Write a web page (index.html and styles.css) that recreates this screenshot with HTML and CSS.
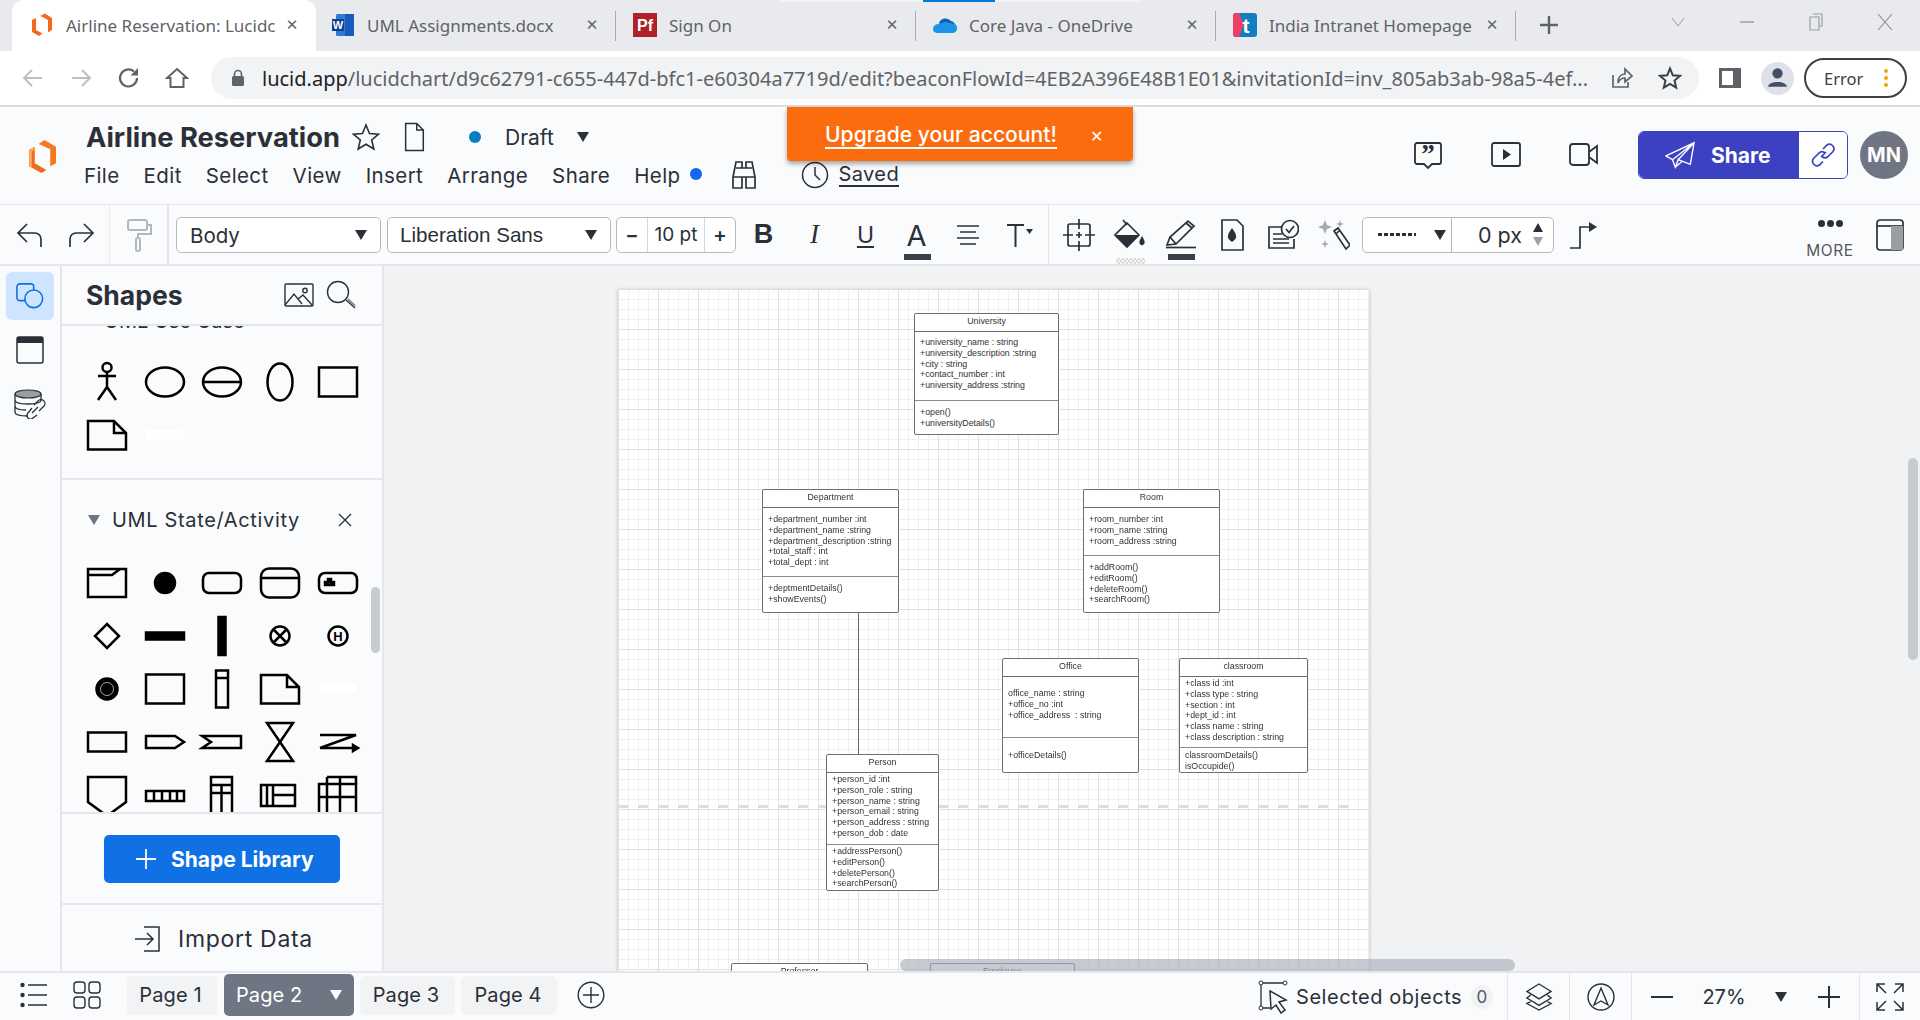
FILE: index.html
```html
<!DOCTYPE html>
<html lang="en">
<head>
<meta charset="utf-8">
<title>Airline Reservation: Lucidchart</title>
<link rel="stylesheet" href="styles.css">
</head>
<body>
<div class="topline"><span class="topline-blue"></span></div>
<div class="tabstrip">
  <div class="tab tab-active">
    <svg class="fav" viewBox="0 0 24 24"><path d="M10 3 L15 0.5 L22 5 V17 L18 19.5 V7 L13.5 4.5Z M2 7 L6 5 V17 L12.5 20.5 L9 23 L2 19Z" fill="#f26a1b"/></svg>
    <span class="tab-text">Airline Reservation: Lucidc</span>
    <span class="tab-x">✕</span>
  </div>
  <div class="tab tab-word">
    <svg class="fav" viewBox="0 0 24 24"><rect x="5" y="1" width="18" height="22" rx="1.5" fill="#2b7cd3"/><rect x="14" y="1" width="9" height="22" fill="#185abd"/><rect x="1" y="6" width="12" height="12" fill="#103f91"/><text x="7" y="15.5" class="fav-w">W</text></svg>
    <span class="tab-text">UML Assignments.docx</span>
    <span class="tab-x">✕</span>
  </div>
  <div class="tab">
    <svg class="fav" viewBox="0 0 24 24"><rect width="24" height="24" fill="#b0222a"/><text x="12" y="18" class="fav-pf">Pf</text></svg>
    <span class="tab-text">Sign On</span>
    <span class="tab-x">✕</span>
  </div>
  <div class="tab">
    <svg class="fav" viewBox="0 0 24 24"><path d="M6 10 A7 7 0 0 1 18 8 A6 6 0 0 1 22 11 L10 16Z" fill="#0a5fb5"/><path d="M1 19 A5 5 0 0 1 5 11 L12 9 L22 11 A5 5 0 0 1 20 20 H4 Z" fill="#1c95e6"/></svg>
    <span class="tab-text">Core Java - OneDrive</span>
    <span class="tab-x">✕</span>
  </div>
  <div class="tab tab-last">
    <svg class="fav" viewBox="0 0 24 24"><rect width="24" height="24" rx="3" fill="#0f7fc1"/><path d="M0 3 A3 3 0 0 1 3 0 H6 L11 12 L6 24 H3 A3 3 0 0 1 0 21Z" fill="#ee3f66"/><text x="13" y="20" class="fav-t">t</text></svg>
    <span class="tab-text">India Intranet Homepage</span>
    <span class="tab-x">✕</span>
  </div>
  <svg class="tab-plus" viewBox="0 0 20 20"><path d="M10 1 V19 M1 10 H19" stroke="#5f6368" stroke-width="2.4"/></svg>
  <div class="win-ctrls">
    <svg class="win" viewBox="0 0 20 20"><path d="M4 6 L10 14 L16 6" fill="none" stroke="#9a9da2" stroke-width="1"/></svg>
    <svg class="win" viewBox="0 0 20 20"><path d="M3 10 H17" stroke="#8a8d92" stroke-width="1.2"/></svg>
    <svg class="win" viewBox="0 0 20 20"><path d="M7 2 H16 V14 H13 M4 5 H13 V18 H4Z" fill="none" stroke="#9a9da2" stroke-width="1.2"/></svg>
    <svg class="win" viewBox="0 0 20 20"><path d="M3 2 L17 18 M17 2 L3 18" stroke="#8a8d92" stroke-width="1.1"/></svg>
  </div>
</div>

<div class="addrbar">
  <svg class="nav-ic" viewBox="0 0 24 24"><path d="M21 12 H3 M11 4 L3 12 L11 20" fill="none" stroke="#bdbfc2" stroke-width="2"/></svg>
  <svg class="nav-ic" viewBox="0 0 24 24"><path d="M3 12 H21 M13 4 L21 12 L13 20" fill="none" stroke="#bdbfc2" stroke-width="2"/></svg>
  <svg class="nav-ic" viewBox="0 0 24 24"><path d="M20 12 A8.5 8.5 0 1 1 17 5.5" fill="none" stroke="#5f6368" stroke-width="2.2"/><path d="M21 2 V9.5 H13.5Z" fill="#5f6368"/></svg>
  <svg class="nav-ic" viewBox="0 0 24 24"><path d="M12 3 L22 12 H18.5 V21 H5.5 V12 H2Z" fill="none" stroke="#5f6368" stroke-width="2"/></svg>
  <div class="omnibox">
    <svg class="lock" viewBox="0 0 14 18"><path d="M3.5 7 V5 A3.5 3.5 0 0 1 10.500 5 V7" fill="none" stroke="#5f6368" stroke-width="1.6"/><rect x="1" y="7" width="12" height="10" rx="1.5" fill="#5f6368"/></svg>
    <span class="url"><span class="url-host">lucid.app</span>/lucidchart/d9c62791-c655-447d-bfc1-e60304a7719d/edit?beaconFlowId=4EB2A396E48B1E01&amp;invitationId=inv_805ab3ab-98a5-4ef...</span>
    <svg class="omni-ic" viewBox="0 0 24 24"><path d="M3 9 V21 H18 V16" fill="none" stroke="#5f6368" stroke-width="1.7"/><path d="M8 17 C8 11 11 8 15 8 V3 L22 10 L15 16 V12 C12 12 9.500 13.500 8 17Z" fill="none" stroke="#5f6368" stroke-width="1.7"/></svg>
    <svg class="omni-ic star-ic" viewBox="0 0 24 24"><path d="M12 2.500 L14.800 9.300 L22 9.900 L16.500 14.600 L18.200 21.700 L12 17.900 L5.800 21.700 L7.500 14.600 L2 9.900 L9.200 9.300Z" fill="none" stroke="#3c4043" stroke-width="2"/></svg>
  </div>
  <svg class="side-ic" viewBox="0 0 22 20"><path d="M0 0 H22 V20 H0Z M3 3 V17 H14 V3Z" fill="#5f6368" fill-rule="evenodd"/></svg>
  <span class="profile"><svg viewBox="0 0 32 32"><circle cx="16" cy="11" r="5" fill="#44506a"/><path d="M7 24 C7 18 25 18 25 24Z" fill="#44506a"/></svg></span>
  <div class="err-pill"><span>Error</span><i class="err-dots"></i></div>
</div>

<header class="apphead">
  <svg class="app-logo" viewBox="0 0 30 34"><path d="M11 4 L17 0 L29 7 V24 L23 27 V9.500 Z" fill="#f47a20"/><path d="M1 10 L7 7 V24 L19 31 L14 34 L1 27Z" fill="#f26a1b"/><path d="M1 10 L7 7 V10 L4 11.500 V28 L1 27Z" fill="#f9a95f"/></svg>
  <div class="doc-col">
    <div class="doc-row">
      <span class="doc-title">Airline Reservation</span>
      <svg class="ic-28 star" viewBox="0 0 28 28"><path d="M14 2 L17.500 10.500 L26.500 11.200 L19.700 17 L21.800 26 L14 21.200 L6.200 26 L8.300 17 L1.500 11.200 L10.500 10.500Z" fill="none" stroke="#2b3038" stroke-width="1.6"/></svg>
      <svg class="ic-28 docic" viewBox="0 0 28 32"><path d="M5 1.500 H17 L24 8.500 V30.500 H5Z M17 1.500 V8.500 H24" fill="none" stroke="#2b3038" stroke-width="1.6"/></svg>
      <span class="blue-dot"></span>
      <span class="draft">Draft</span>
      <i class="caret caret-draft"></i>
    </div>
    <nav class="menu-row">
      <span>File</span><span>Edit</span><span>Select</span><span>View</span><span>Insert</span><span>Arrange</span><span>Share</span>
      <span class="help">Help<i class="help-dot"></i></span>
      <svg class="binoc" viewBox="0 0 26 30"><path d="M5 2 H11 V8 H15 V2 H21 L24 17 V28 H15 V17 H11 V28 H2 V17Z M2 17 H11 M15 17 H24 M5 8 H11 M15 8 H21" fill="none" stroke="#2b3038" stroke-width="1.7"/></svg>
      <svg class="clock" viewBox="0 0 28 28"><circle cx="14" cy="14" r="12.500" fill="none" stroke="#2b3038" stroke-width="1.5"/><path d="M14 6 V14 L19 19" fill="none" stroke="#2b3038" stroke-width="1.5"/></svg>
      <span class="saved">Saved</span>
    </nav>
  </div>
  <div class="head-right">
    <svg class="hd-ic" viewBox="0 0 30 30"><path d="M4 3 H26 A2 2 0 0 1 28 5 V22 A2 2 0 0 1 26 24 H19 L15 28 L11 24 H4 A2 2 0 0 1 2 22 V5 A2 2 0 0 1 4 3Z" fill="none" stroke="#2b3038" stroke-width="1.8"/><text x="15" y="23" class="quote-glyph">”</text></svg>
    <svg class="hd-ic" viewBox="0 0 30 30"><rect x="1" y="3" width="28" height="23" rx="2" fill="none" stroke="#2b3038" stroke-width="1.8"/><path d="M12 9 L20 14.500 L12 20Z" fill="#2b3038"/></svg>
    <svg class="hd-ic" viewBox="0 0 30 30"><rect x="1" y="4" width="19" height="21" rx="3" fill="none" stroke="#2b3038" stroke-width="1.8"/><path d="M20 12 L28 6 V23 L20 17" fill="none" stroke="#2b3038" stroke-width="1.8"/></svg>
    <div class="share-btn">
      <div class="share-main">
        <svg class="plane" viewBox="0 0 32 28"><path d="M1 15 L31 1 L27 24 L14 19 L11 27 L8 19 Z M8 19 L31 1 M14 19 L31 1 M11 27 L18 21" fill="none" stroke="#fff" stroke-width="1.5"/></svg>
        <span>Share</span>
      </div>
      <div class="share-link">
        <svg viewBox="0 0 26 26"><path d="M11 15 L16 10 M13 7 L17 3 A4.500 4.500 0 0 1 23 9.500 L18 14.500 A4.500 4.500 0 0 1 12 14.500 M15 11 A4.500 4.500 0 0 0 9 11 L3.500 16.500 A4.500 4.500 0 0 0 9.500 23 L13 19.500" fill="none" stroke="#3b41c0" stroke-width="1.7"/></svg>
      </div>
    </div>
    <span class="avatar">MN</span>
  </div>
  <div class="upgrade"><a class="upgrade-link">Upgrade your account!</a><span class="upgrade-x">✕</span></div>
</header>

<div class="toolbar">
  <div class="tb-hist">
    <svg class="tb-ic" viewBox="0 0 30 30"><path d="M4 13 H20 A6 6 0 0 1 26 19 V27 M12 4 L3 13 L12 22" fill="none" stroke="#2b3038" stroke-width="1.7"/></svg>
    <svg class="tb-ic" viewBox="0 0 30 30"><path d="M26 13 H10 A6 6 0 0 0 4 19 V27 M18 4 L27 13 L18 22" fill="none" stroke="#2b3038" stroke-width="1.7"/></svg>
  </div>
  <div class="tb-paint">
    <svg class="tb-ic" viewBox="0 0 30 34"><rect x="4" y="2" width="19" height="10" rx="2" fill="none" stroke="#b4b7bc" stroke-width="2"/><path d="M23 7 H27 V16 H14 V20" fill="none" stroke="#b4b7bc" stroke-width="2"/><rect x="12" y="20" width="4" height="13" rx="1.500" fill="none" stroke="#b4b7bc" stroke-width="2"/></svg>
  </div>
  <div class="sel sel-body"><span>Body</span><i class="caret"></i></div>
  <div class="sel sel-font"><span>Liberation Sans</span><i class="caret"></i></div>
  <div class="size-box"><b class="sz-btn">−</b><span class="sz-val">10 pt</span><b class="sz-btn">+</b></div>
  <div class="tcell fmt-b">B</div>
  <div class="tcell fmt-i">I</div>
  <div class="tcell fmt-u">U</div>
  <div class="tcell fmt-a">A<i class="color-bar"></i></div>
  <div class="tcell"><svg class="tb-ic" viewBox="0 0 30 30"><path d="M4 6 H26 M7 12 H23 M4 18 H26 M7 24 H23" stroke="#2b3038" stroke-width="1.7"/></svg></div>
  <div class="tcell"><svg class="tb-ic" viewBox="0 0 30 30"><path d="M3 5 H20 M11.500 5 V27" stroke="#2b3038" stroke-width="2" fill="none"/><path d="M22 9 H29 L25.500 14Z" fill="#2b3038"/></svg></div>
  <div class="tb-sep"></div>
  <div class="tcell"><svg class="tb-ic big" viewBox="0 0 32 32"><rect x="5" y="5" width="22" height="22" rx="2" fill="none" stroke="#2b3038" stroke-width="1.700"/><path d="M16 0 V10 M16 22 V32 M0 16 H10 M22 16 H32 M13 16 H19 M16 13 V19" stroke="#2b3038" stroke-width="1.700"/></svg></div>
  <div class="tcell"><svg class="tb-ic big" viewBox="0 0 32 32"><path d="M13 4 L25 16 L13 28 L1 16Z" fill="none" stroke="#2b3038" stroke-width="1.600"/><path d="M1 16 H25 L13 28Z" fill="#2b3038"/><path d="M9 1 L13 6" stroke="#2b3038" stroke-width="1.600"/><path d="M28 17 C31 22 32 25 28 26.500 C24 25 25 22 28 17Z" fill="#2b3038"/></svg><i class="fill-bar"></i></div>
  <div class="tcell"><svg class="tb-ic big" viewBox="0 0 32 32"><path d="M2 26 L5 18 L23 2 L29 7 L11 25Z M21 4 L27 9 M5 18 L11 25" fill="none" stroke="#2b3038" stroke-width="1.700"/><path d="M1 28.500 H31" stroke="#2b3038" stroke-width="1.700"/></svg><i class="color-bar"></i></div>
  <div class="tcell"><svg class="tb-ic big" viewBox="0 0 32 32"><path d="M6 1 H21 L27 7 V31 H6Z" fill="none" stroke="#2b3038" stroke-width="1.700"/><path d="M16 9 C21 16 22 19 16 23 C10 19 11 16 16 9Z" fill="#2b3038"/></svg></div>
  <div class="tcell"><svg class="tb-ic big" viewBox="0 0 32 32"><path d="M19 8 H2 V29 H27 V20 M6 15 H15 M6 20 H22 M6 24 H22" fill="none" stroke="#2b3038" stroke-width="1.700"/><circle cx="23" cy="10" r="8.500" fill="#fafbfd" stroke="#2b3038" stroke-width="1.700"/><path d="M19 10 L22 13.500 L27 7" fill="none" stroke="#2b3038" stroke-width="1.700"/></svg></div>
  <div class="tcell"><svg class="tb-ic big" viewBox="0 0 32 32"><path d="M7 1 L9 6 L14 8 L9 10 L7 15 L5 10 L0 8 L5 6Z M22 1 L23 4 L26 5 L23 6 L22 9 L21 6 L18 5 L21 4Z M7 21 L8 24 L11 25 L8 26 L7 29 L6 26 L3 25 L6 24Z" fill="#a6a9ae"/><path d="M16 12 L20 9 L32 26 L28 30Z M18 15 L21 12" fill="none" stroke="#2b3038" stroke-width="1.700"/></svg></div>
  <div class="line-sel">
    <div class="line-left"><i class="dash-sample"></i><i class="caret"></i></div>
    <div class="line-right"><span>0 px</span><span class="steppers"><i class="step-up"></i><i class="step-down"></i></span></div>
  </div>
  <div class="tcell elbow"><svg class="tb-ic big" viewBox="0 0 32 32"><path d="M2 29 H12 V8 H22" fill="none" stroke="#2b3038" stroke-width="1.700"/><path d="M21 3 L29 8 L21 13Z" fill="#2b3038"/></svg></div>
  <div class="tb-right">
    <div class="more"><span class="more-dots"><i></i><i></i><i></i></span><span>MORE</span></div>
    <svg class="panel-ic" viewBox="0 0 28 32"><rect x="1" y="1" width="26" height="30" rx="3" fill="none" stroke="#2b3038" stroke-width="1.700"/><path d="M1 7 H27" stroke="#2b3038" stroke-width="1.700"/><rect x="15" y="7" width="12" height="24" fill="#9a9da2"/></svg>
  </div>
</div>

<div class="main">
  <aside class="rail">
    <div class="rail-btn rail-active"><svg viewBox="0 0 30 28"><rect x="1" y="1" width="18" height="18" rx="3" fill="none" stroke="#1071e5" stroke-width="1.700"/><circle cx="19" cy="17" r="9.500" fill="#cfe4ff" stroke="#1071e5" stroke-width="1.700"/></svg></div>
    <div class="rail-btn"><svg viewBox="0 0 28 28"><rect x="1" y="1" width="26" height="26" rx="2" fill="none" stroke="#2b3038" stroke-width="1.500"/><rect x="1" y="1" width="26" height="6" fill="#2b3038"/></svg></div>
    <div class="rail-btn"><svg viewBox="0 0 32 30"><ellipse cx="14" cy="5" rx="13" ry="4" fill="#9a9da2" stroke="#2b3038" stroke-width="1.200"/><path d="M1 5 V23 C1 26 7 27 14 27 M27 5 V12 M1 11 C1 14 8 15 14 15 C20 15 27 14 27 11 M1 17 C1 20 6 21 12 21" fill="none" stroke="#2b3038" stroke-width="1.300"/><path d="M18 24 L24 18 M20 16 L24 12 A3.500 3.500 0 0 1 30 17 L25 22 M23 26 L19 29 A3.500 3.500 0 0 1 14 24 L18 19" fill="none" stroke="#2b3038" stroke-width="1.300"/></svg></div>
  </aside>

  <aside class="panel">
    <div class="panel-head">
      <h2 class="panel-title">Shapes</h2>
      <svg class="ph-img" viewBox="0 0 30 24"><rect x="1" y="1" width="28" height="22" rx="1" fill="none" stroke="#2b3038" stroke-width="1.400"/><circle cx="21" cy="7.500" r="2.200" fill="none" stroke="#2b3038" stroke-width="1.400"/><path d="M1 22 L10 11 L18 21 M14 16 L19 12 L28 22" fill="none" stroke="#2b3038" stroke-width="1.400"/></svg>
      <svg class="ph-search" viewBox="0 0 30 30"><circle cx="12" cy="12" r="10.500" fill="none" stroke="#2b3038" stroke-width="1.400"/><path d="M20 20 L29 28" stroke="#2b3038" stroke-width="1.400"/><path d="M22 19 L29 26" stroke="#8b8e93" stroke-width="2.200"/></svg>
    </div>
    <div class="shape-scroll">
      <div class="scroll-content">
        <section class="sec sec-first">
          <div class="sec-cut">UML Use Case</div>
          <div class="shape-grid">
            <svg viewBox="0 0 48 48" class="shp"><circle cx="24" cy="9.500" r="4.500"/><path d="M24 14 V29 M15 18 H33 M15 42 L24 29 L33 42"/></svg>
            <svg viewBox="0 0 48 48" class="shp"><ellipse cx="24" cy="24" rx="19" ry="14.500"/></svg>
            <svg viewBox="0 0 48 48" class="shp"><ellipse cx="24" cy="24" rx="19" ry="14.500"/><path d="M5 24 H43"/></svg>
            <svg viewBox="0 0 48 48" class="shp"><ellipse cx="24" cy="24" rx="12.500" ry="18.500"/></svg>
            <svg viewBox="0 0 48 48" class="shp"><rect x="5" y="9.500" width="38" height="29"/></svg>
            <svg viewBox="0 0 48 48" class="shp"><path d="M5 10 H31 L43 22 V38.500 H5Z M31 10 V22 H43"/></svg>
            <svg viewBox="0 0 48 48" class="shp"><rect x="5" y="19" width="37" height="9" class="blank"/></svg>
          </div>
        </section>
        <section class="sec sec-state">
          <div class="sec-title"><i class="caret caret-gray"></i><span>UML State/Activity</span><svg viewBox="0 0 14 14" class="sec-x"><path d="M1 1 L13 13 M13 1 L1 13" stroke="#2b3038" stroke-width="1.300"/></svg></div>
          <div class="shape-grid">
            <svg viewBox="0 0 48 48" class="shp"><rect x="5" y="10" width="38" height="28"/><path d="M5 16 H29 L37 10"/></svg>
            <svg viewBox="0 0 48 48" class="shp"><circle cx="24" cy="24" r="10" class="solid"/></svg>
            <svg viewBox="0 0 48 48" class="shp"><rect x="5" y="14" width="38" height="20" rx="6"/></svg>
            <svg viewBox="0 0 48 48" class="shp"><rect x="5" y="9.500" width="38" height="29" rx="8"/><path d="M5 19 H43"/></svg>
            <svg viewBox="0 0 48 48" class="shp"><rect x="5" y="14" width="38" height="20" rx="6"/><path d="M11 26 H20 V23 H11Z M14 20 H17 V26 H14Z" class="solid"/></svg>

            <svg viewBox="0 0 48 48" class="shp"><path d="M24 12 L36 24 L24 36 L12 24Z"/></svg>
            <svg viewBox="0 0 48 48" class="shp"><rect x="5" y="20.500" width="38" height="7" class="solid"/></svg>
            <svg viewBox="0 0 48 48" class="shp"><rect x="20.500" y="5" width="7" height="38" class="solid"/></svg>
            <svg viewBox="0 0 48 48" class="shp"><circle cx="24" cy="24" r="9.500"/><path d="M17.500 17.500 L30.500 30.500 M30.500 17.500 L17.500 30.500"/></svg>
            <svg viewBox="0 0 48 48" class="shp"><circle cx="24" cy="24" r="9.500"/><text x="24" y="28.500" class="shp-h">H</text></svg>

            <svg viewBox="0 0 48 48" class="shp"><circle cx="24" cy="24" r="10.500" class="solid"/><circle cx="24" cy="24" r="6.500" class="ring"/></svg>
            <svg viewBox="0 0 48 48" class="shp"><rect x="5" y="9.500" width="38" height="29"/></svg>
            <svg viewBox="0 0 48 48" class="shp"><rect x="18" y="5.500" width="12" height="37"/><path d="M18 13 H30"/></svg>
            <svg viewBox="0 0 48 48" class="shp"><path d="M5 10 H31 L43 22 V38.500 H5Z M31 10 V22 H43"/></svg>
            <svg viewBox="0 0 48 48" class="shp"><rect x="5" y="19" width="37" height="9" class="blank"/></svg>

            <svg viewBox="0 0 48 48" class="shp"><rect x="5" y="14.500" width="38" height="19"/></svg>
            <svg viewBox="0 0 48 48" class="shp"><path d="M5 18 H34 L43 24 L34 30 H5Z"/></svg>
            <svg viewBox="0 0 48 48" class="shp"><path d="M4 18 H43 V30 H4 L13 24Z"/></svg>
            <svg viewBox="0 0 48 48" class="shp"><path d="M11 5 H37 L11 43 H37Z"/></svg>
            <svg viewBox="0 0 48 48" class="shp"><path d="M6 30 L42 17 H6 M6 30 H40"/><path d="M39 27 L44 30 L39 33Z" class="solid"/></svg>

            <svg viewBox="0 0 48 48" class="shp"><path d="M5 5 H43 V30 L24 44 L5 30Z"/></svg>
            <svg viewBox="0 0 48 48" class="shp"><rect x="5" y="19" width="38" height="10"/><path d="M13 19 V29 M21 19 V29 M29 19 V29 M36 19 V29"/></svg>
            <svg viewBox="0 0 48 48" class="shp"><rect x="13" y="5" width="21" height="38"/><path d="M13 13 H34 M23.500 13 V43 M13 21 H34"/></svg>
            <svg viewBox="0 0 48 48" class="shp"><rect x="5" y="13" width="34" height="21"/><path d="M11 13 V34 M17 13 V34 M17 23 H39"/></svg>
            <svg viewBox="0 0 48 48" class="shp"><rect x="5" y="12" width="37" height="32"/><path d="M13 5 H42 V12 M13 5 V44 M5 25 H42 M26 5 V44"/></svg>
          </div>
        </section>
      </div>
      <i class="panel-scroll"></i>
    </div>
    <div class="lib-wrap">
      <div class="lib-btn"><svg viewBox="0 0 22 22"><path d="M11 1 V21 M1 11 H21" stroke="#fff" stroke-width="1.800"/></svg><span>Shape Library</span></div>
    </div>
    <div class="import"><svg viewBox="0 0 28 28"><path d="M10 2 H25 V26 H10 M1 14 H19 M13 8 L19 14 L13 20" fill="none" stroke="#2b3038" stroke-width="1.500"/></svg><span>Import Data</span></div>
  </aside>

  <div class="canvas">
    <div class="page">
      <div class="pagebreak"></div>
      <div class="conn"></div>

      <div class="uml n-univ">
        <div class="uml-title">University</div>
        <div class="uml-attr">+university_name : string<br>+university_description :string<br>+city : string<br>+contact_number : int<br>+university_address :string</div>
        <div class="uml-meth">+open()<br>+universityDetails()</div>
      </div>

      <div class="uml n-dept">
        <div class="uml-title">Department</div>
        <div class="uml-attr">+department_number :int<br>+department_name :string<br>+department_description :string<br>+total_staff : int<br>+total_dept : int</div>
        <div class="uml-meth">+deptmentDetails()<br>+showEvents()</div>
      </div>

      <div class="uml n-room">
        <div class="uml-title">Room</div>
        <div class="uml-attr">+room_number :int<br>+room_name :string<br>+room_address :string</div>
        <div class="uml-meth">+addRoom()<br>+editRoom()<br>+deleteRoom()<br>+searchRoom()</div>
      </div>

      <div class="uml n-office">
        <div class="uml-title">Office</div>
        <div class="uml-attr">office_name : string<br>+office_no :int<br>+office_address &nbsp;: string</div>
        <div class="uml-meth">+officeDetails()</div>
      </div>

      <div class="uml n-class">
        <div class="uml-title">classroom</div>
        <div class="uml-attr">+class id :int<br>+class type : string<br>+section : int<br>+dept_id : int<br>+class name : string<br>+class description : string</div>
        <div class="uml-meth">classroomDetails()<br>isOccupide()</div>
      </div>

      <div class="uml n-person">
        <div class="uml-title">Person</div>
        <div class="uml-attr">+person_id :int<br>+person_role : string<br>+person_name : string<br>+person_email : string<br>+person_address : string<br>+person_dob : date</div>
        <div class="uml-meth">+addressPerson()<br>+editPerson()<br>+deletePerson()<br>+searchPerson()</div>
      </div>

      <div class="uml n-prof"><div class="uml-title">Professor</div></div>
      <div class="uml n-emp"><div class="uml-title">Employee</div></div>
    </div>
    <i class="hscroll"></i>
    <i class="vscroll"></i>
  </div>
</div>

<footer class="statusbar">
  <svg class="st-list" viewBox="0 0 28 26"><path d="M8 3 H27 M8 13 H27 M8 23 H27" stroke="#2b3038" stroke-width="1.500"/><circle cx="2.500" cy="3" r="2.200" fill="#2b3038"/><circle cx="2.500" cy="13" r="2.200" fill="#2b3038"/><circle cx="2.500" cy="23" r="2.200" fill="#2b3038"/></svg>
  <svg class="st-grid" viewBox="0 0 28 28"><rect x="1" y="1" width="11" height="11" rx="3" fill="none" stroke="#2b3038" stroke-width="1.400"/><rect x="16" y="1" width="11" height="11" rx="3" fill="none" stroke="#2b3038" stroke-width="1.400"/><rect x="1" y="16" width="11" height="11" rx="3" fill="none" stroke="#2b3038" stroke-width="1.400"/><rect x="16" y="16" width="11" height="11" rx="3" fill="none" stroke="#2b3038" stroke-width="1.400"/></svg>
  <div class="pg pg1">Page 1</div>
  <div class="pg pg-active"><span>Page 2</span><i class="caret caret-white"></i></div>
  <div class="pg pg3">Page 3</div>
  <div class="pg pg4">Page 4</div>
  <svg class="st-add" viewBox="0 0 28 28"><circle cx="14" cy="14" r="12.800" fill="none" stroke="#2b3038" stroke-width="1.400"/><path d="M14 6 V22 M6 14 H22" stroke="#2b3038" stroke-width="1.400"/></svg>
  <div class="st-right">
    <div class="selected">
      <svg viewBox="0 0 30 34"><path d="M3 3 H27 M3 3 V28 M3 28 H12" stroke="#2b3038" stroke-width="1.300" fill="none"/><circle cx="3" cy="3" r="2" fill="#fafbfd" stroke="#2b3038"/><circle cx="27" cy="3" r="2" fill="#fafbfd" stroke="#2b3038"/><circle cx="3" cy="28" r="2" fill="#fafbfd" stroke="#2b3038"/><path d="M12 11 L28 20 L21 22 L27 30 L23 33 L18 25 L13 29Z" fill="#fafbfd" stroke="#2b3038" stroke-width="1.500"/></svg>
      <span>Selected objects</span><b class="count">0</b>
    </div>
    <div class="st-cell st-layer"><svg viewBox="0 0 28 30"><path d="M14 1 L27 9 L14 17 L1 9Z M5 13 L1 16 L14 24 L27 16 L23 13 M5 20 L1 22 L14 29 L27 22 L23 20" fill="none" stroke="#2b3038" stroke-width="1.400"/></svg></div>
    <div class="st-cell st-nav"><svg viewBox="0 0 28 28"><circle cx="14" cy="14" r="13" fill="none" stroke="#2b3038" stroke-width="1.400"/><path d="M14 5 L21 22 L14 18 L7 22Z" fill="none" stroke="#2b3038" stroke-width="1.400"/></svg></div>
    <div class="st-zoom">
      <svg class="z-ic" viewBox="0 0 22 22"><path d="M0 11 H22" stroke="#2b3038" stroke-width="2"/></svg>
      <span class="z-val">27%</span>
      <i class="caret"></i>
      <svg class="z-ic" viewBox="0 0 22 22"><path d="M0 11 H22 M11 0 V22" stroke="#2b3038" stroke-width="2"/></svg>
    </div>
    <div class="st-cell st-full"><svg viewBox="0 0 28 28"><path d="M1 9 V1 H9 M1 1 L10 10 M27 9 V1 H19 M27 1 L18 10 M1 19 V27 H9 M1 27 L10 18 M27 19 V27 H19 M27 27 L18 18" fill="none" stroke="#2b3038" stroke-width="1.500"/></svg></div>
  </div>
</footer>
</body>
</html>
```

FILE: styles.css
```css
* { box-sizing: border-box; }
html, body { margin: 0; padding: 0; }
body {
  width: 1920px; height: 1020px; overflow: hidden;
  display: flex; flex-direction: column;
  font-family: Inter, "Noto Sans", sans-serif;
  color: #2b3038; background: #fafbfd;
  position: relative;
}
i { display: block; font-style: normal; }
svg { display: block; flex: none; }

/* browser chrome */
.topline { position: absolute; left: 780px; top: 0; width: 361px; height: 2px; background: #f1f2f3; }
.topline-blue { display: block; margin-left: 143px; width: 72px; height: 2px; background: #0078d4; }
.tabstrip { height: 51px; flex: none; background: #e8eaed; display: flex; align-items: stretch; padding-left: 12px; font-family: "Noto Sans", sans-serif; }
.tab { width: 300px; display: flex; align-items: center; padding: 0 17px 1px 17px; position: relative; }
.tab-word { padding-left: 15px; }
.tab:not(.tab-active)::after { content: ""; position: absolute; right: 0; top: 11px; height: 30px; width: 1px; background: #a8abb0; }
.tab-active { width: 304px; background: #fff; border-radius: 12px 12px 0 0; padding-left: 18px; }
.fav { width: 24px; height: 24px; margin-right: 12px; }
.fav-w { font: bold 11px "Liberation Sans", sans-serif; fill: #fff; text-anchor: middle; }
.fav-pf { font: bold 16px "Liberation Sans", sans-serif; fill: #fff; text-anchor: middle; }
.fav-t { font: bold 21px "Liberation Sans", sans-serif; fill: #fff; text-anchor: middle; }
.tab-text { flex: 1; min-width: 0; white-space: nowrap; overflow: hidden; font-size: 17px; color: #5f6368; }
.tab-x { width: 14px; font-size: 15px; color: #5f6368; margin-left: 8px; text-align: center; font-family: "DejaVu Sans", sans-serif; }
.tab-plus { width: 20px; height: 20px; margin: 15px 0 0 23px; }
.win-ctrls { margin-left: auto; display: flex; gap: 49px; padding: 12px 25px 0 0; }
.win { width: 20px; height: 20px; }

.addrbar { height: 56px; flex: none; background: #fff; border-bottom: 2px solid #dcdcdc; display: flex; align-items: center; padding: 0 0 0 21px; gap: 24px; font-family: "Noto Sans", sans-serif; }
.nav-ic { width: 24px; height: 24px; }
.omnibox { width: 1488px; height: 42px; margin-left: -2px; margin-right: 21px; border-radius: 21px; background: #f1f3f4; display: flex; align-items: center; padding-left: 20px; }
.lock { width: 14px; height: 18px; margin-right: 17px; }
.url { font-size: 20px; color: #5f6368; white-space: nowrap; width: 1345px; overflow: hidden; }
.url-host { color: #202124; }
.omni-ic { width: 24px; height: 24px; margin-left: 3px; }
.star-ic { margin-left: 24px; }
.side-ic { width: 22px; height: 20px; margin-left: -25px; }
.profile { width: 33px; height: 33px; border-radius: 50%; background: #dfe1e6; margin-left: -4px; }
.profile svg { width: 33px; height: 33px; }
.err-pill { width: 103px; height: 40px; margin-left: -14px; border: 2px solid #3c4043; border-radius: 20px; display: flex; align-items: center; padding-left: 18px; font-size: 16.500px; color: #3c4043; position: relative; }
.err-dots { position: absolute; right: 17px; top: 9px; width: 4px; height: 4px; border-radius: 50%; background: #f5a100; box-shadow: 0 7px 0 #f5a100, 0 14px 0 #f5a100; }

/* app header */
.apphead { height: 97px; flex: none; display: flex; position: relative; background: #fafbfd; }
.app-logo { width: 29px; height: 33px; margin: 33px 0 0 28px; }
.doc-col { margin-left: 29px; display: flex; flex-direction: column; }
.doc-row { display: flex; align-items: center; height: 36px; margin-top: 12px; }
.doc-title { font-size: 27.300px; font-weight: 700; width: 266px; white-space: nowrap; color: #2b3038; }
.ic-28 { width: 28px; height: 28px; }
.star { margin-left: 0; }
.docic { margin-left: 21px; width: 26px; height: 30px; }
.blue-dot { width: 12px; height: 12px; border-radius: 50%; background: #0a7cc1; margin-left: 42px; }
.draft { font-size: 21px; margin-left: 24px; }
.caret { width: 0; height: 0; border-left: 6.500px solid transparent; border-right: 6.500px solid transparent; border-top: 10px solid #2b3038; flex: none; }
.caret-draft { margin-left: 23px; }
.menu-row { display: flex; align-items: center; gap: 24px; font-size: 20.500px; letter-spacing: .4px; margin-top: 4px; height: 32px; margin-left: -2px; }
.help { position: relative; }
.help-dot { position: absolute; right: -21px; top: 5px; width: 12px; height: 12px; border-radius: 50%; background: #1467e6; }
.binoc { width: 26px; height: 30px; margin-left: 26px; }
.clock { width: 28px; height: 28px; margin-left: 20px; }
.saved { margin-left: -14px; border-bottom: 2px solid #2b3038; line-height: 22px; font-size: 20px; }

.upgrade { position: absolute; left: 787px; top: 0; width: 346px; height: 54px; background: #fb6c0f; border-radius: 0 0 4px 4px; box-shadow: 0 3px 5px rgba(0,0,0,.35); color: #fff; display: flex; align-items: center; padding: 4px 0 0 38px; font-size: 21.100px; }
.upgrade-link { border-bottom: 2px solid #fff; line-height: 24px; font-weight: 500; }
.upgrade-x { position: absolute; left: 303px; font-size: 16px; font-family: "DejaVu Sans", sans-serif; }

.head-right { margin-left: auto; display: flex; align-items: center; height: 48px; margin-top: 24px; padding-right: 12px; }
.hd-ic { width: 30px; height: 30px; margin-right: 48px; }
.quote-glyph { font: bold 27px "Liberation Serif", serif; fill: #2b3038; text-anchor: middle; }
.share-btn { width: 210px; height: 48px; margin-left: -9px; border-radius: 6px; border: 1px solid #3b41c0; display: flex; overflow: hidden; }
.share-main { width: 160px; background: #3b41c0; color: #fff; display: flex; align-items: center; padding-left: 26px; gap: 16px; font-weight: 700; font-size: 21px; }
.plane { width: 30px; height: 28px; }
.share-link { flex: 1; background: #fff; display: flex; align-items: center; justify-content: center; }
.share-link svg { width: 26px; height: 26px; }
.avatar { width: 48px; height: 48px; border-radius: 50%; background: #6f7582; color: #fff; font-weight: 700; font-size: 20px; display: flex; align-items: center; justify-content: center; margin-left: 12px; }

/* toolbar */
.toolbar { height: 62px; flex: none; border-top: 1px solid #e4e6ea; border-bottom: 2px solid #e4e6ea; display: flex; align-items: center; }
.tb-hist { width: 110px; height: 100%; display: flex; align-items: center; gap: 21px; padding-left: 15px; border-right: 1px solid #e8eaed; }
.tb-paint { width: 59px; height: 100%; display: flex; align-items: center; justify-content: center; border-right: 2px solid #e4e6ea; }
.tb-ic { width: 30px; height: 30px; }
.tb-paint .tb-ic { height: 34px; }
.tb-ic.big { width: 32px; height: 32px; }
.sel { height: 36px; border: 1px solid #b6b9c0; border-radius: 5px; background: #fff; display: flex; align-items: center; justify-content: space-between; padding: 1px 13px 0; font-size: 20.500px; margin-left: 6px; }
.sel-body { width: 205px; margin-left: 7px; }
.sel-font { width: 224px; font-family: "Liberation Sans", sans-serif; font-size: 20.600px; padding-left: 12px; }
.size-box { width: 120px; height: 36px; margin-left: 5px; border: 1px solid #b6b9c0; border-radius: 5px; background: #fff; display: flex; align-items: center; font-size: 19px; }
.sz-btn { width: 30px; text-align: center; font-weight: 600; font-size: 20px; }
.sz-val { flex: 1; text-align: center; height: 100%; line-height: 34px; border-left: 1px solid #d5d7dc; border-right: 1px solid #d5d7dc; white-space: nowrap; }
.tcell { width: 51px; height: 100%; display: flex; align-items: center; justify-content: center; position: relative; flex: none; font-size: 27px; }
.toolbar > .size-box + .tcell { margin-left: 2px; }
.fmt-b { font-weight: 800; font-family: "Liberation Sans", sans-serif; }
.fmt-i { font-style: italic; font-family: "Liberation Serif", serif; }
.fmt-u { text-decoration: underline; text-decoration-thickness: 2px; text-underline-offset: 3px; font-size: 23px; }
.fmt-a { font-size: 29px; padding-top: 2px; }
.color-bar { position: absolute; left: 13px; bottom: 4px; width: 27px; height: 6px; background: #3a404b; }
.fill-bar { position: absolute; left: 12px; bottom: 0; width: 29px; height: 6px; background: repeating-conic-gradient(#d9d9d9 0 25%, #f3f3f3 0 50%) 0 0 / 4px 4px; }
.tb-sep { width: 1px; height: 100%; background: #e0e2e6; flex: none; margin-left: 4px; margin-right: 4px; }
.line-sel { width: 192px; height: 36px; margin-left: 3px; border: 1px solid #b6b9c0; border-radius: 5px; background: #fff; display: flex; flex: none; }
.line-left { width: 89px; display: flex; align-items: center; justify-content: space-between; padding: 0 5px 0 15px; border-right: 1px solid #b6b9c0; }
.dash-sample { width: 38px; height: 3px; background: repeating-linear-gradient(90deg, #2b3038 0 4px, transparent 4px 6px); }
.line-right { flex: 1; display: flex; align-items: center; padding-left: 26px; font-size: 21.500px; justify-content: space-between; padding-right: 10px; }
.steppers { display: flex; flex-direction: column; gap: 5px; }
.step-up, .step-down { width: 0; height: 0; border-left: 5px solid transparent; border-right: 5px solid transparent; }
.step-up { border-bottom: 9px solid #2b3038; }
.step-down { border-top: 9px solid #9da0a6; }
.elbow { margin-left: 4px; }
.tb-right { margin-left: auto; display: flex; align-items: center; padding-right: 16px; }
.more { width: 50px; display: flex; flex-direction: column; align-items: center; font-size: 15.500px; letter-spacing: .6px; color: #555960; gap: 14px; padding-top: 10px; }
.more-dots { display: flex; gap: 2px; }
.more-dots i { width: 7px; height: 7px; border-radius: 50%; background: #2b3038; }
.panel-ic { width: 28px; height: 32px; margin-left: 21px; }

/* main */
.main { flex: 1; min-height: 0; display: flex; }
.rail { width: 62px; border-right: 2px solid #e4e6ea; flex: none; padding: 6px 6px 0 6px; display: flex; flex-direction: column; gap: 6px; }
.rail-btn { width: 48px; height: 48px; border-radius: 6px; display: flex; align-items: center; justify-content: center; }
.rail-active { background: #cfe4ff; }
.rail-btn svg { width: 28px; height: 28px; }
.rail-btn:last-child svg { width: 32px; height: 30px; }
.panel { width: 322px; flex: none; border-right: 2px solid #e4e6ea; display: flex; flex-direction: column; }
.panel-head { height: 60px; flex: none; border-bottom: 2px solid #e4e6ea; display: flex; align-items: center; padding-left: 24px; }
.panel-title { margin: 0; font-size: 26.500px; font-weight: 700; width: 177px; color: #2b3038; }
.ph-img { width: 30px; height: 24px; margin-left: 21px; }
.ph-search { width: 30px; height: 30px; margin-left: 12px; }
.shape-scroll { height: 488px; flex: none; overflow: hidden; position: relative; border-bottom: 2px solid #e4e6ea; }
.scroll-content { margin-top: -16px; }
.sec-first { border-bottom: 2px solid #e4e6ea; height: 170px; padding-left: 16px; }
.sec-cut { height: 22px; line-height: 22px; padding-left: 26px; font-size: 20px; margin-bottom: 23px; color: #2b3038; }
.sec-state { padding: 29px 0 0 16px; }
.sec-title { height: 22px; display: flex; align-items: center; font-size: 20px; margin-bottom: 25px; letter-spacing: .65px; }
.caret-gray { border-top-color: #6f7582; margin: 0 12px 0 10px; }
.sec-x { width: 14px; height: 14px; margin-left: 38px; }
.shape-grid { display: grid; grid-template-columns: repeat(5, 57.800px); grid-auto-rows: 53.250px; justify-items: center; align-items: center; }
.shp { width: 48px; height: 48px; fill: none; stroke: #000; stroke-width: 2.500; }
.shp .solid { fill: #000; stroke: #000; }
.shp .ring { stroke: #ccc; stroke-width: .8; }
.shp .blank { fill: #fff; stroke: none; }
.shp-h { font: bold 13px "Liberation Sans", sans-serif; fill: #000; stroke: none; text-anchor: middle; }
.panel-scroll { position: absolute; left: 309px; top: 261px; width: 9px; height: 66px; border-radius: 5px; background: #c8cad2; }
.lib-wrap { height: 91px; flex: none; border-bottom: 2px solid #e4e6ea; padding: 21px 0 0 42px; }
.lib-btn { width: 236px; height: 48px; border-radius: 5px; background: #1071e5; color: #fff; display: flex; align-items: center; padding-left: 31px; gap: 14px; font-weight: 700; font-size: 21px; white-space: nowrap; }
.lib-btn svg { width: 22px; height: 22px; }
.import { flex: 1; display: flex; align-items: center; padding: 2px 0 0 72px; gap: 16px; font-size: 23px; letter-spacing: .7px; }
.import svg { width: 28px; height: 28px; }

/* canvas */
.canvas { flex: 1; position: relative; overflow: hidden; background: #f1f2f4; }
.page {
  position: absolute; left: 234px; top: 24px; width: 751px; height: 1100px;
  background-color: #fff;
  background-image:
    linear-gradient(90deg, #dfe1e4 1px, transparent 1px),
    linear-gradient(#dfe1e4 1px, transparent 1px),
    linear-gradient(90deg, #eff0f2 1px, transparent 1px),
    linear-gradient(#eff0f2 1px, transparent 1px);
  background-size: 40px 40px, 40px 40px, 10px 10px, 10px 10px;
  background-position: 0 -1px, 0 -1px, 0 -1px, 0 -1px;
  box-shadow: 0 0 4px rgba(0,0,0,.22);
  filter: blur(.25px);
}
.pagebreak { position: absolute; left: 0; top: 515px; width: 730px; height: 3px; background: repeating-linear-gradient(90deg, #dcdddf 0 10px, transparent 10px 20px); }
.conn { position: absolute; left: 240px; top: 323px; width: 1px; height: 142px; background: #666a70; }
.uml { position: absolute; background: #fff; border: 1px solid #6a6e75; border-radius: 2px; display: flex; flex-direction: column; font: 8.800px/10.750px "Liberation Sans", sans-serif; color: #2f3237; overflow: hidden; }
.uml-title { height: 18px; flex: none; border-bottom: 1px solid #6a6e75; text-align: center; line-height: 14px; white-space: nowrap; }
.uml-attr { flex: none; padding-left: 5px; white-space: nowrap; }
.uml-meth { flex: 1; padding-left: 5px; border-top: 1px solid #8a8d92; white-space: nowrap; }
.n-univ { left: 296px; top: 23px; width: 145px; height: 122px; }
.n-univ .uml-attr { height: 68px; padding-top: 5px; }
.n-univ .uml-meth { padding-top: 6px; }
.n-dept { left: 144px; top: 199px; width: 137px; height: 124px; }
.n-dept .uml-attr { height: 68px; padding-top: 6px; }
.n-dept .uml-meth { padding-top: 6px; }
.n-room { left: 465px; top: 199px; width: 137px; height: 124px; }
.n-room .uml-attr { height: 47px; padding-top: 6px; }
.n-room .uml-meth { padding-top: 6px; }
.n-office { left: 384px; top: 368px; width: 137px; height: 115px; }
.n-office .uml-attr { height: 60px; padding-top: 11px; }
.n-office .uml-meth { padding-top: 12px; }
.n-class { left: 561px; top: 368px; width: 129px; height: 115px; }
.n-class .uml-attr { height: 70px; padding-top: 1px; }
.n-class .uml-meth { padding-top: 2px; }
.n-person { left: 208px; top: 464px; width: 113px; height: 137px; }
.n-person .uml-attr { height: 71px; padding-top: 1px; }
.n-person .uml-meth { padding-top: 1px; }
.n-prof { left: 113px; top: 673px; width: 137px; height: 40px; }
.n-emp { left: 312px; top: 673px; width: 145px; height: 40px; }
.hscroll { position: absolute; left: 516px; top: 693px; width: 615px; height: 12px; border-radius: 6px; background: rgba(170,174,186,.65); }
.vscroll { position: absolute; right: 2px; top: 192px; width: 10px; height: 202px; border-radius: 5px; background: #c8cad2; }

/* status bar */
.statusbar { height: 49px; flex: none; border-top: 2px solid #e4e6ea; display: flex; align-items: center; font-size: 20px; padding: 0 0 3px 20px; }
.st-list { width: 28px; height: 26px; }
.st-grid { width: 28px; height: 28px; margin-left: 25px; }
.pg { height: 39px; border-radius: 5px; background: #f2f3f5; display: flex; align-items: center; justify-content: center; white-space: nowrap; letter-spacing: .1px; }
.pg1 { width: 90px; margin-left: 26px; padding-right: 3px; }
.pg-active { width: 130px; height: 42px; margin-left: 7px; background: #6f7582; color: #fff; justify-content: space-between; padding: 0 12px; }
.caret-white { border-top-color: #fff; }
.pg3 { width: 95px; margin-left: 6px; padding-right: 3px; }
.pg4 { width: 96px; margin-left: 6px; padding-right: 2px; }
.st-add { width: 28px; height: 28px; margin-left: 20px; }
.st-right { margin-left: auto; display: flex; align-items: stretch; height: calc(100% + 3px); margin-bottom: -3px; }
.selected { display: flex; align-items: center; width: 250px; gap: 8px; border-right: 1px solid #e4e6ea; font-size: 20px; letter-spacing: .55px; white-space: nowrap; }
.selected svg { width: 30px; height: 34px; }
.count { width: 22px; height: 24px; border-radius: 50%; background: #f1f2f4; font-weight: 400; text-align: center; font-size: 17px; line-height: 24px; margin-left: 1px; color: #555960; }
.st-cell { width: 62px; display: flex; align-items: center; justify-content: center; border-right: 1px solid #e4e6ea; }
.st-cell svg { width: 28px; height: 28px; }
.st-zoom { width: 228px; display: flex; align-items: center; border-right: 1px solid #e4e6ea; padding-left: 19px; }
.z-ic { width: 22px; height: 22px; }
.z-val { width: 80px; text-align: center; margin-left: 11px; font-size: 20px; }
.st-zoom .caret { margin-left: 11px; }
.st-zoom .z-ic:last-child { margin-left: 31px; }
.st-full { border-right: 0; width: 60px; }
```
